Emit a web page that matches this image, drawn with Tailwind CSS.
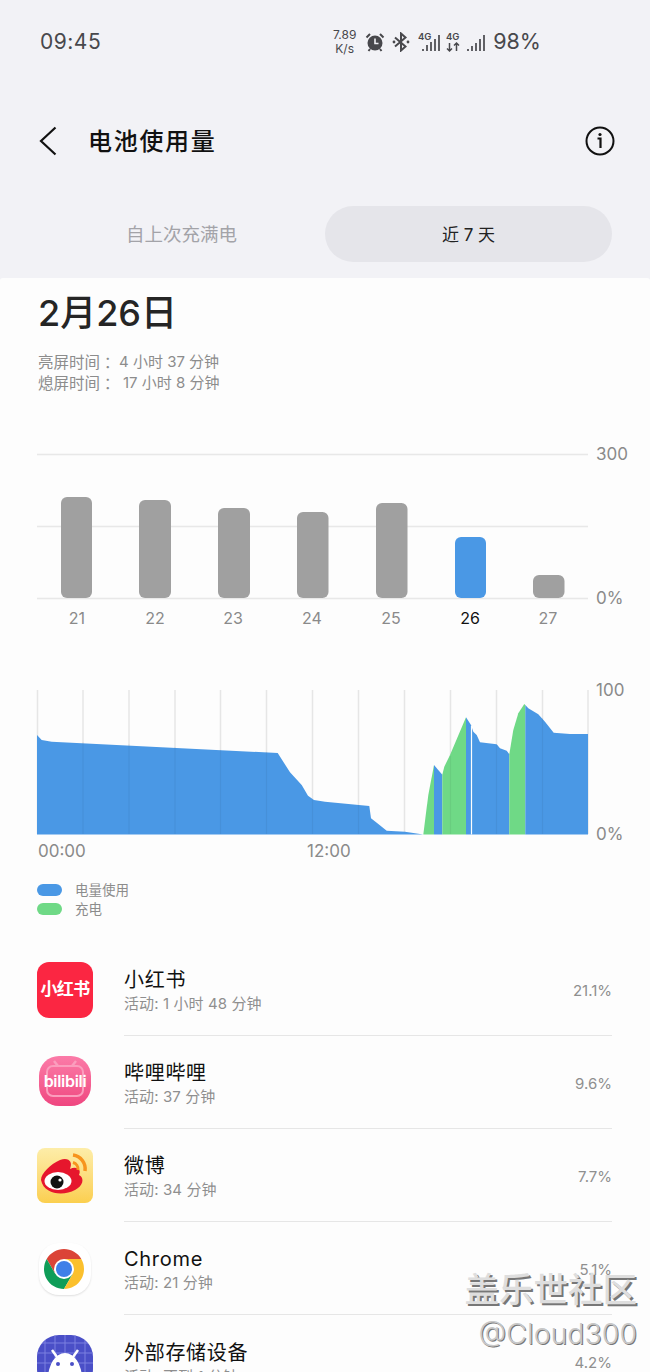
<!DOCTYPE html>
<html lang="zh-CN">
<head>
    <meta charset="UTF-8">
    <meta name="viewport" content="width=device-width, initial-scale=1.0">
    <title>电池使用量</title>
    <script src="https://cdn.jsdelivr.net/npm/@tailwindcss/browser@4"></script>
</head>
<body class="relative w-[650px] h-[1372px] overflow-hidden bg-[#f2f2f6] font-['Inter','Noto_Sans_CJK_SC',sans-serif]">

    <!-- header -->
    <div class="h-[278px]">
        <div class="flex h-[83px] items-center pl-[40px]">
            <span class="text-[21px] text-[#48484c] tracking-[0.5px]">09:45</span>
            <div class="ml-[230px] flex w-[27px] flex-col items-center text-[12px] leading-[14px] text-[#48484c]">
                <span>7.89</span>
                <span>K/s</span>
            </div>
            <!-- alarm -->
            <svg class="ml-[7px]" width="20" height="20" viewBox="0 0 20 20">
                <circle cx="10" cy="11" r="7.5" fill="#48484c"/>
                <path d="M1.5 5.5 L5 2 M18.5 5.5 L15 2 M5 17 L3.5 19 M15 17 L16.5 19" stroke="#48484c" stroke-width="2" fill="none"/>
                <path d="M10 6.5 V11.5 H13.5" stroke="#f2f2f6" stroke-width="1.6" fill="none"/>
            </svg>
            <!-- bluetooth -->
            <svg class="ml-[7px]" width="18" height="20" viewBox="0 0 18 20">
                <path d="M3 5.5 L13.5 14.5 L9 18.5 V1.5 L13.5 5.5 L3 14.5" stroke="#48484c" stroke-width="2" fill="none"/>
                <circle cx="2" cy="10" r="1.4" fill="#48484c"/>
                <circle cx="16" cy="10" r="1.4" fill="#48484c"/>
            </svg>
            <!-- sim 1 -->
            <svg class="ml-[8px]" width="22" height="22" viewBox="0 0 22 22">
                <text x="0" y="9" font-size="9.500" font-weight="600" fill="#48484c">4G</text>
                <path d="M5 20 V18 M9 20 V14 M13 20 V11 M17 20 V8 M21 20 V4" stroke="#48484c" stroke-width="1.7" fill="none"/>
            </svg>
            <!-- sim 2 -->
            <svg class="ml-[6px]" width="15" height="22" viewBox="0 0 15 22">
                <text x="0" y="9" font-size="9.500" font-weight="600" fill="#48484c">4G</text>
                <path d="M3.5 12 V20 M1 17.5 L3.5 20 L6 17.5 M10.5 20 V12 M8 14.5 L10.5 12 L13 14.5" stroke="#48484c" stroke-width="1.5" fill="none"/>
            </svg>
            <svg class="ml-[6px]" width="18" height="22" viewBox="0 0 18 22">
                <path d="M1 20 V18 M5 20 V15 M9 20 V12 M13 20 V8 M17 20 V4" stroke="#48484c" stroke-width="1.7" fill="none"/>
            </svg>
            <span class="ml-[8px] text-[21.5px] text-[#48484c]">98%</span>
        </div>

        <div class="mt-[28px] flex h-[60px] items-center pl-[38px] pr-[35px]">
            <svg width="20" height="30" viewBox="0 0 20 30">
                <path d="M17.500 1.500 L3 15 L17.500 28.500" stroke="#111" stroke-width="2.200" fill="none"/>
            </svg>
            <span class="ml-[30px] pt-[2px] text-[24px] font-medium tracking-[1.7px] text-[#111]">电池使用量</span>
            <svg class="ml-auto" width="30" height="30" viewBox="0 0 30 30">
                <circle cx="15" cy="15" r="13.5" stroke="#111" stroke-width="2" fill="none"/>
                <circle cx="15" cy="8.5" r="1.6" fill="#111"/>
                <path d="M12.5 12.5 H15.5 V22" stroke="#111" stroke-width="2.2" fill="none"/>
            </svg>
        </div>

        <div class="mt-[35px] grid h-[56px] grid-cols-[287px_287px] pl-[38px]">
            <div class="flex items-center justify-center pt-[1px] text-[18.5px] text-[#a3a3a8]">自上次充满电</div>
            <div class="flex items-center justify-center rounded-full bg-[#e5e5ea] pt-[3px] text-[17px] text-[#222]">近 7 天</div>
        </div>
    </div>

    <!-- sheet -->
    <div class="h-[1094px] rounded-t-[3px] bg-[#fdfdfd]">
        <div class="pt-[13px] pl-[38px] text-[36px] leading-[44px] font-medium text-[#252525]">2月26日</div>
        <div class="mt-[17px] h-[42px] pl-[38px] text-[15px] text-[#8c8c8c]">
            <div class="flex h-[21px] items-center whitespace-pre"><span class="text-[15.5px]">亮屏时间</span><span class="w-[19px] font-['Noto_Sans_CJK_TC'] text-[15.5px]">：</span>4 小时 37 分钟</div>
            <div class="flex h-[21px] items-center whitespace-pre"><span class="text-[15.5px]">熄屏时间</span><span class="w-[23px] font-['Noto_Sans_CJK_TC'] text-[15.5px]">：</span>17 小时 8 分钟</div>
        </div>

        <!-- weekly bars -->
        <svg class="mt-[46px] block" width="650" height="190" viewBox="0 440 650 190">
            <g stroke="#e8e8e8" stroke-width="1.5">
                <path d="M37 454.5 H588 M37 526.5 H588 M37 598.5 H588"/>
            </g>
            <rect x="61" y="497" width="31" height="101" rx="6" fill="#a0a0a0"/>
            <rect x="139" y="500" width="32" height="98" rx="6" fill="#a0a0a0"/>
            <rect x="218" y="508" width="32" height="90" rx="6" fill="#a0a0a0"/>
            <rect x="297" y="512" width="31.500" height="86" rx="6" fill="#a0a0a0"/>
            <rect x="376" y="503" width="31.500" height="95" rx="6" fill="#a0a0a0"/>
            <rect x="455" y="537" width="31" height="61" rx="6" fill="#4a98e5"/>
            <rect x="533" y="575" width="31.500" height="23" rx="6" fill="#a0a0a0"/>
            <g font-size="16" fill="#8a8a8a" text-anchor="middle">
                <text x="77" y="624">21</text>
                <text x="155" y="624">22</text>
                <text x="233" y="624">23</text>
                <text x="312" y="624">24</text>
                <text x="391" y="624">25</text>
                <text x="470" y="624" fill="#111">26</text>
                <text x="548" y="624">27</text>
            </g>
            <g font-size="17" fill="#8a8a8a">
                <text x="596" y="460">300</text>
                <text x="596" y="604">0%</text>
            </g>
        </svg>

        <!-- daily usage -->
        <svg class="mt-[50px] block" width="650" height="182" viewBox="0 680 650 182">
            <g stroke="#e6e6e6" stroke-width="1.5">
                <path d="M37.500 690 V834 M83 690 V834 M129 690 V834 M175 690 V834 M220.500 690 V834 M266.500 690 V834 M312.500 690 V834 M358.500 690 V834 M404.500 690 V834 M450.500 690 V834 M496.500 690 V834 M542.500 690 V834 M588 690 V834"/>
            </g>
            <path fill="#4a98e5" d="M37 735 L41.700 740 L51.700 741.700 L277.700 753 L290 772.300 L301.700 785 L308 795.700 L314 800 L325 801.700 L369.300 806 L371 818.300 L378.300 824 L386.700 830.700 L405 831.700 L423.300 834.500 L37 834.500 Z"/>
            <path fill="#6fd986" d="M423.300 834.500 L428.300 795 L434 765 L434 834.500 Z"/>
            <path fill="#4a98e5" d="M434 765 L442.300 774.700 L442.300 834.500 L434 834.500 Z"/>
            <path fill="#6fd986" d="M442.300 774.700 L444.300 766.700 L450 755 L466 717.300 L466 834.500 L442.300 834.500 Z"/>
            <path fill="#4a98e5" d="M466 717.300 L471 725 L473.300 731.700 L476.700 735 L480 742.300 L496.700 744.300 L500 748.300 L506.700 750.700 L509.300 754.300 L509.300 834.500 L466 834.500 Z"/>
            <path fill="#6fd986" d="M509.300 754.300 L513.300 730 L518.300 713.300 L524.300 704 L525.300 705 L525.300 834.500 L509.300 834.500 Z"/>
            <path fill="#4a98e5" d="M525.300 705 L528.300 708.300 L538.300 714.300 L545 721.700 L553.700 732.700 L570 734 L588 734 L588 834.500 L525.300 834.500 Z"/>
            <path d="M471.500 726 V834.500" stroke="#fdfdfd" stroke-width="1.200"/>
            <path stroke="#000" stroke-opacity="0.05" stroke-width="1.200" d="M83 742 V834 M129 744 V834 M175 747 V834 M220.500 750 V834 M266.500 752 V834 M312.500 800 V834 M358.500 805 V834 M450.500 756 V834 M496.500 745 V834 M542.500 718 V834"/>
            <g font-size="17" fill="#8a8a8a">
                <text x="596" y="696">100</text>
                <text x="596" y="840">0%</text>
                <text x="38" y="857">00:00</text>
                <text x="307" y="857">12:00</text>
            </g>
        </svg>

        <!-- legend -->
        <div class="mt-[22px] flex flex-col gap-[7px] pl-[37px] text-[13.5px] leading-[12px] text-[#8c8c8c]">
            <div class="flex items-center gap-[13px]"><span class="h-[12px] w-[25px] rounded-full bg-[#4a98e5]"></span>电量使用</div>
            <div class="flex items-center gap-[13px]"><span class="h-[12px] w-[25px] rounded-full bg-[#6fd986]"></span>充电</div>
        </div>

        <!-- apps -->
        <div class="mt-[28px]">
            <div class="flex h-[93px] pl-[37px] pr-[38px]">
                <div class="flex h-[56px] w-[56px] items-center justify-center self-center rounded-[12px] bg-[#fb2642] text-[17px] leading-none font-bold tracking-[-0.6px] text-white">小红书</div>
                <div class="ml-[31px] flex flex-1 items-center border-b-[1.5px] border-[#e6e6e6] pt-[4px]">
                    <div>
                        <div class="text-[20px] leading-[26px] tracking-[0.7px] text-[#111]">小红书</div>
                        <div class="text-[15px] leading-[22px] tracking-[0.1px] text-[#8f8f8f]">活动: 1 小时 48 分钟</div>
                    </div>
                    <span class="ml-auto text-[15px] text-[#8f8f8f]">21.1%</span>
                </div>
            </div>
            <div class="flex h-[93px] pl-[37px] pr-[38px]">
                <div class="relative mx-[2px] mb-[3px] flex h-[50px] w-[52px] items-center justify-center self-center rounded-[20px] bg-gradient-to-b from-[#fb7ba8] to-[#ef4680]">
                    <svg class="absolute inset-0" width="52" height="50" viewBox="0 0 52 50">
                        <path d="M19 10 L15 5 M33 10 L37 5" stroke="#fb9dbd" stroke-width="2.500"/>
                        <rect x="8" y="10" width="36" height="30" rx="6" fill="none" stroke="#fb9dbd" stroke-width="2"/>
                    </svg>
                    <span class="relative text-[16px] leading-none font-semibold tracking-[-0.3px] text-white">bilibili</span>
                </div>
                <div class="ml-[31px] flex flex-1 items-center border-b-[1.5px] border-[#e6e6e6] pt-[4px]">
                    <div>
                        <div class="text-[20px] leading-[26px] tracking-[0.7px] text-[#111]">哔哩哔哩</div>
                        <div class="text-[15px] leading-[22px] tracking-[0.1px] text-[#8f8f8f]">活动: 37 分钟</div>
                    </div>
                    <span class="ml-auto text-[15px] text-[#8f8f8f]">9.6%</span>
                </div>
            </div>
            <div class="flex h-[93px] pl-[37px] pr-[38px]">
                <div class="h-[55px] w-[56px] self-center overflow-hidden rounded-[8px] bg-gradient-to-b from-[#fdeda8] to-[#fbcf4e]">
                    <svg width="56" height="55" viewBox="0 0 56 55">
                        <path d="M4 32 C4 25 14 16 23 12 C32 9 36 14 33 21 C39 18 45 21 42 27 C48 30 46 38 38 42 C27 48 7 47 4 32 Z" fill="#e6162d"/>
                        <ellipse cx="21" cy="33" rx="13.500" ry="9" fill="#fff"/>
                        <circle cx="20" cy="34" r="6.500" fill="#111"/>
                        <circle cx="23" cy="32" r="1.600" fill="#fff"/>
                        <path d="M36 7 A14 14 0 0 1 48 23" stroke="#f7941d" stroke-width="3.500" fill="none"/>
                        <path d="M36 14.500 A7 7 0 0 1 41 22" stroke="#f7941d" stroke-width="3" fill="none"/>
                    </svg>
                </div>
                <div class="ml-[31px] flex flex-1 items-center border-b-[1.5px] border-[#e6e6e6] pt-[4px]">
                    <div>
                        <div class="text-[20px] leading-[26px] tracking-[0.7px] text-[#111]">微博</div>
                        <div class="text-[15px] leading-[22px] tracking-[0.1px] text-[#8f8f8f]">活动: 34 分钟</div>
                    </div>
                    <span class="ml-auto text-[15px] text-[#8f8f8f]">7.7%</span>
                </div>
            </div>
            <div class="flex h-[93px] pl-[37px] pr-[38px]">
                <div class="mx-[2px] h-[52px] w-[52px] self-center rounded-[20px] bg-white shadow-[0_1px_2px_rgba(0,0,0,0.12)]">
                    <svg width="52" height="52" viewBox="3 2 52 52">
                        <path fill="#db4437" d="M45.320 18 A20 20 0 0 0 10.680 18 L19.340 33 L28 28 L28 18 Z"/>
                        <path fill="#0f9d58" d="M10.680 18 A20 20 0 0 0 28 48 L36.660 33 L28 28 L19.340 33 Z"/>
                        <path fill="#fbc02d" d="M28 48 A20 20 0 0 0 45.320 18 L28 18 L28 28 L36.660 33 Z"/>
                        <circle cx="28" cy="28" r="10" fill="#fff"/>
                        <circle cx="28" cy="28" r="8" fill="#3f7fe8"/>
                    </svg>
                </div>
                <div class="ml-[31px] flex flex-1 items-center border-b-[1.5px] border-[#e6e6e6] pt-[4px]">
                    <div>
                        <div class="text-[20px] leading-[26px] tracking-[0.7px] text-[#111]">Chrome</div>
                        <div class="text-[15px] leading-[22px] tracking-[0.1px] text-[#8f8f8f]">活动: 21 分钟</div>
                    </div>
                    <span class="ml-auto text-[15px] text-[#8f8f8f]">5.1%</span>
                </div>
            </div>
            <div class="flex h-[93px] pl-[37px] pr-[38px]">
                <div class="mt-[3px] h-[56px] w-[56px] self-center overflow-hidden rounded-[22px] bg-[#4a4fc7]">
                    <svg width="56" height="56" viewBox="0 0 56 56">
                        <path d="M8 0 V56 M18 0 V56 M28 0 V56 M38 0 V56 M48 0 V56 M0 8 H56 M0 18 H56 M0 28 H56 M0 38 H56" stroke="#7b80e0" stroke-width="1"/>
                        <path d="M15 15 L20 22 M41 15 L36 22" stroke="#fff" stroke-width="2.500"/>
                        <path d="M11 44 A17 26 0 0 1 45 44 Z" fill="#fff"/>
                        <circle cx="21" cy="29" r="2" fill="#4a4fc7"/>
                        <circle cx="35" cy="29" r="2" fill="#4a4fc7"/>
                    </svg>
                </div>
                <div class="ml-[31px] flex flex-1 items-center pt-[4px]">
                    <div>
                        <div class="text-[20px] leading-[26px] tracking-[0.7px] text-[#111]">外部存储设备</div>
                        <div class="text-[15px] leading-[22px] tracking-[0.1px] text-[#8f8f8f]">活动: 不到 1 分钟</div>
                    </div>
                    <span class="ml-auto text-[15px] text-[#8f8f8f]">4.2%</span>
                </div>
            </div>
        </div>
    </div>

    <!-- watermark -->
    <div class="absolute right-[13px] top-[1270px] text-right">
        <div class="text-[34.5px] leading-[40px] font-medium text-[#dedede] [text-shadow:2px_2px_0_#777]">盖乐世社区</div>
        <div class="mt-[4px] text-[28.5px] leading-[40px] font-light text-[#c8c8c8] [text-shadow:1px_1px_0_#777]">@Cloud300</div>
    </div>
</body>
</html>
